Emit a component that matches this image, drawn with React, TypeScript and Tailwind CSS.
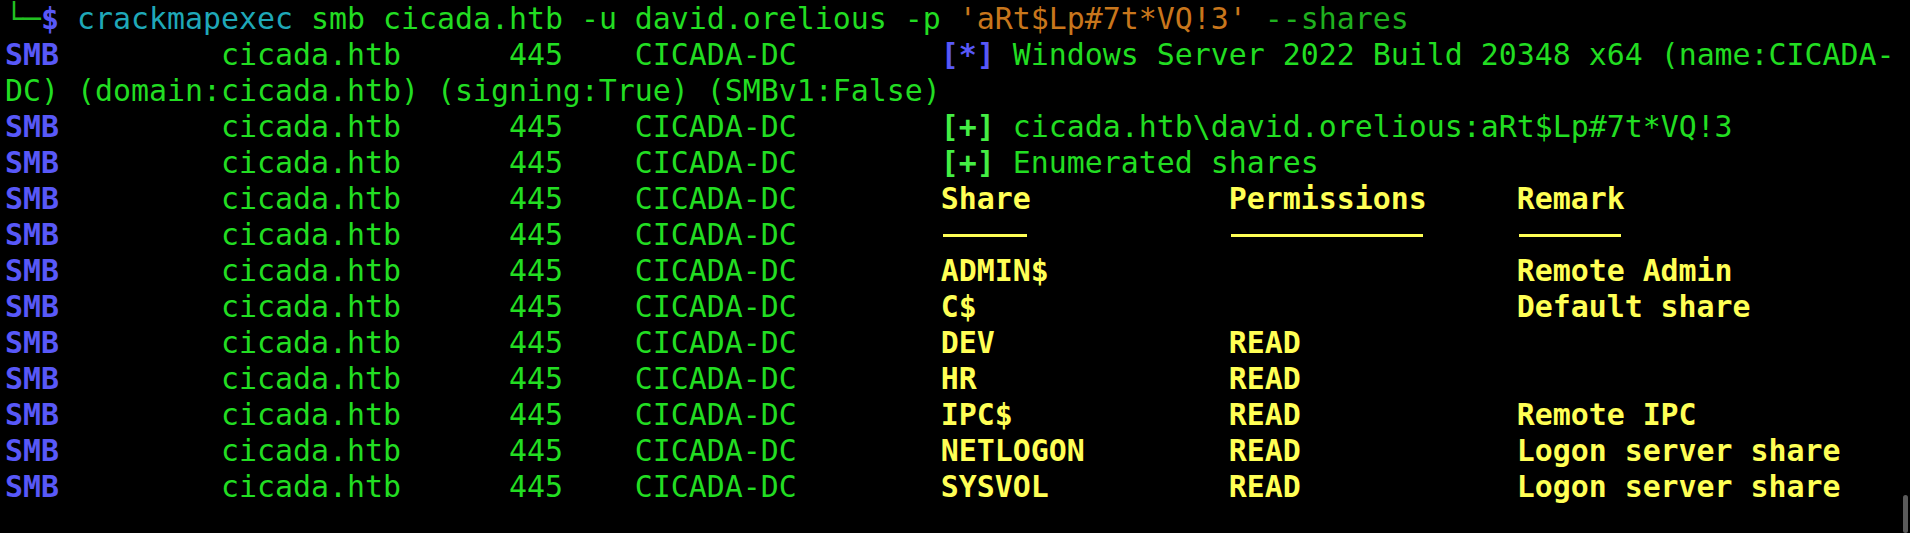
import React from "react";

const G = "text-[#22dd22]";
const BLUE = "text-[#5858f8] font-bold";
const BG = "text-[#44ee44] font-bold";
const Y = "text-[#ffff55] font-bold";

const prefix = (
  <>
    <span className={BLUE}>SMB</span>
    <span className={G}>{"         cicada.htb      445    CICADA-DC        "}</span>
  </>
);

function Bar({ n }: { n: number }) {
  return (
    <span className="inline-flex items-center align-top h-[36px]" style={{ width: n * 18 }}>
      <span className="block h-[3px] bg-[#ffff55] ml-[2px] mr-[4px] w-full" />
    </span>
  );
}

function Row({ children }: { children: React.ReactNode }) {
  return <div className="h-[36px] whitespace-pre">{children}</div>;
}

const shares: [string, string, string][] = [
  ["ADMIN$", "", "Remote Admin"],
  ["C$", "", "Default share"],
  ["DEV", "READ", ""],
  ["HR", "READ", ""],
  ["IPC$", "READ", "Remote IPC"],
  ["NETLOGON", "READ", "Logon server share"],
  ["SYSVOL", "READ", "Logon server share"],
];

export default function App() {
  return (
    <div
      className="relative w-[1910px] h-[533px] bg-black overflow-hidden text-[29.9px] leading-[36px]"
      style={{ fontFamily: '"DejaVu Sans Mono", "Liberation Mono", monospace' }}
    >
      <div className="pl-[5px] pt-[1px]">
        <Row>
          <span className="text-[#22c022]">└─</span>
          <span className={BLUE}>$</span>
          <span> </span>
          <span className="text-[#1fa8b8]">crackmapexec</span>
          <span className={G}>{" smb cicada.htb -u david.orelious -p "}</span>
          <span className="text-[#c8761c]">'aRt$Lp#7t*VQ!3'</span>
          <span> </span>
          <span className="text-[#1fb01f]">--shares</span>
        </Row>
        <Row>
          {prefix}
          <span className={BLUE}>[*]</span>
          <span className={G}>{" Windows Server 2022 Build 20348 x64 (name:CICADA-"}</span>
        </Row>
        <Row>
          <span className={G}>DC) (domain:cicada.htb) (signing:True) (SMBv1:False)</span>
        </Row>
        <Row>
          {prefix}
          <span className={BG}>[+]</span>
          <span className={G}>{" cicada.htb\\david.orelious:aRt$Lp#7t*VQ!3"}</span>
        </Row>
        <Row>
          {prefix}
          <span className={BG}>[+]</span>
          <span className={G}>{" Enumerated shares"}</span>
        </Row>
        <Row>
          {prefix}
          <span className={Y}>{"Share           Permissions     Remark"}</span>
        </Row>
        <Row>
          {prefix}
          <Bar n={5} />
          <span>{"           "}</span>
          <Bar n={11} />
          <span>{"     "}</span>
          <Bar n={6} />
        </Row>
        {shares.map(([s, p, r]) => (
          <Row key={s}>
            {prefix}
            <span className={Y}>{s.padEnd(16) + p.padEnd(16) + r}</span>
          </Row>
        ))}
      </div>
      <div className="absolute right-[2px] bottom-0 w-[5px] h-[38px] rounded-full bg-[#5a5a5a]" />
    </div>
  );
}
